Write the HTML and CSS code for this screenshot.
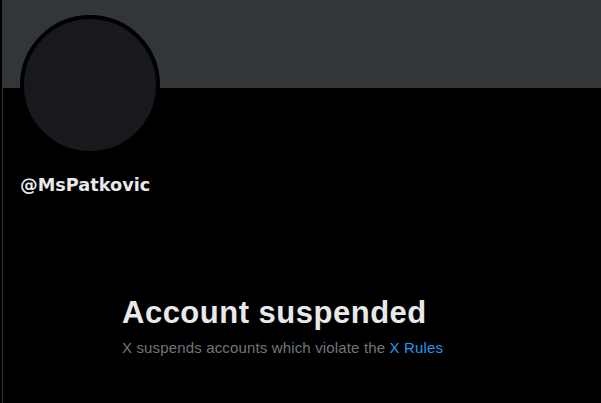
FILE: index.html
```html
<!DOCTYPE html>
<html>
<head>
<meta charset="utf-8">
<link rel="stylesheet" href="styles.css">
</head>
<body>
<div class="page">
  <div class="banner"></div>
  <div class="avatar"></div>
  <div class="handle">@MsPatkovic</div>
  <div class="notice">
    <h1 class="notice-title">Account suspended</h1>
    <p class="notice-text">X suspends accounts which violate the <a class="notice-link" href="#">X Rules</a></p>
  </div>
</div>
</body>
</html>
```
FILE: styles.css
```css
html, body {
  margin: 0;
  padding: 0;
  background: #000;
}
body {
  font-family: "Liberation Sans", Arial, sans-serif;
  color: #e7e9ea;
}
.page {
  margin-left: 2px;
  border-left: 1px solid #2f3336;
  min-height: 403px;
  box-sizing: border-box;
}
.banner {
  height: 88px;
  background: #333639;
}
.avatar {
  width: 132px;
  height: 132px;
  border: 4px solid #000;
  border-radius: 50%;
  background: #17191d;
  margin: -73px 0 0 17px;
}
.handle {
  margin: 20px 0 0 17px;
  font-family: "DejaVu Sans", "Liberation Sans", sans-serif;
  font-size: 17.7px;
  line-height: 20px;
  font-weight: 700;
  color: #e7e9ea;
}
.notice {
  margin: 100px 0 0 119px;
}
.notice-title {
  margin: 0;
  font-size: 31px;
  line-height: 36px;
  font-weight: 700;
  letter-spacing: 0.5px;
  color: #e7e9ea;
}
.notice-text {
  margin: 7px 0 0;
  font-size: 15px;
  line-height: 20px;
  letter-spacing: 0.15px;
  color: #71767b;
}
.notice-link {
  color: #1d9bf0;
  text-decoration: none;
}
```
